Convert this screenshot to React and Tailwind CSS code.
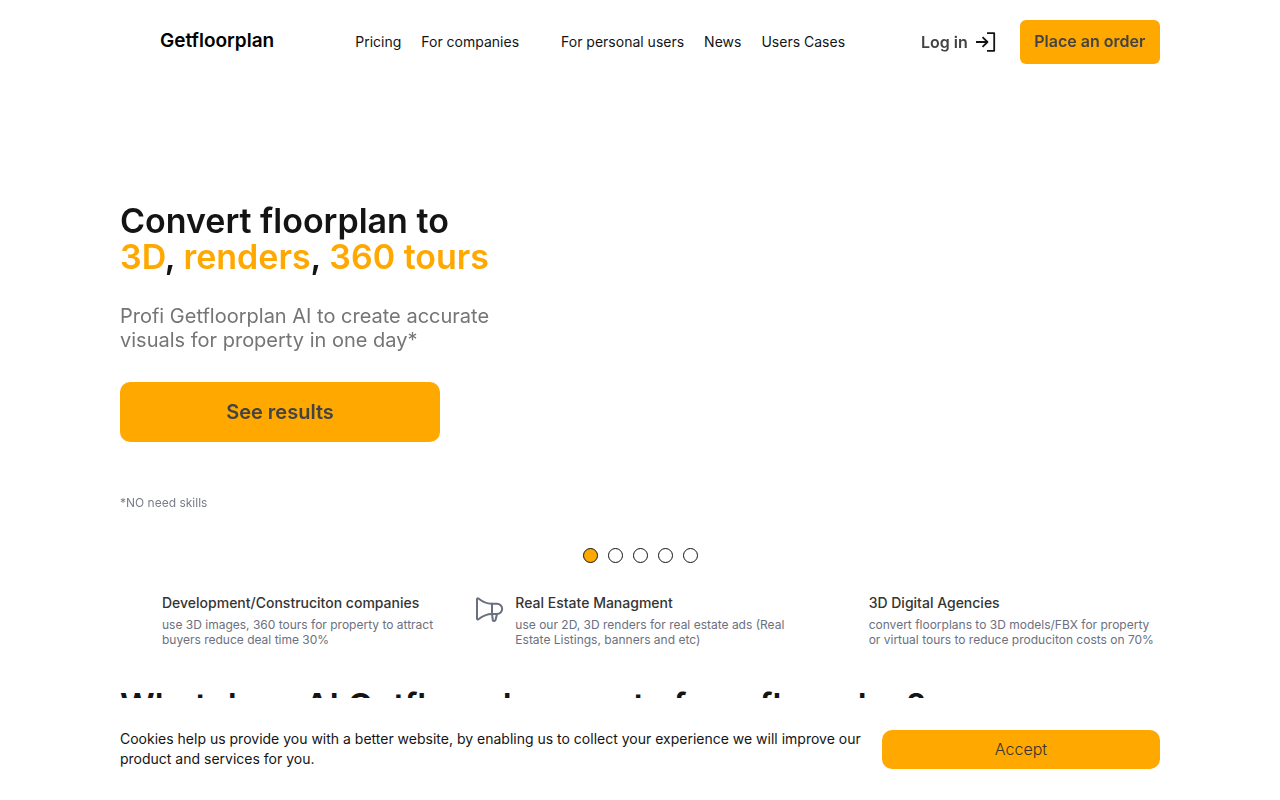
import { useState } from 'react';

const companyLinks = ['Pricing', 'For companies'];
const userLinks = ['For personal users', 'News', 'Users Cases'];

const features = [
  {
    title: 'Development/Construciton companies',
    text: 'use 3D images, 360 tours for property to attract buyers reduce deal time 30%',
  },
  {
    title: 'Real Estate Managment',
    text: 'use our 2D, 3D renders for real estate ads (Real Estate Listings, banners and etc)',
    icon: true,
  },
  {
    title: '3D Digital Agencies',
    text: 'convert floorplans to 3D models/FBX for property or virtual tours to reduce produciton costs on 70%',
  },
];

const LoginIcon = () => (
  <svg className="w-6 h-6" viewBox="0 0 24 24" fill="none" stroke="#141414" strokeWidth="1.8" strokeLinejoin="round" aria-hidden="true">
    <path d="M13 3.2h7.200v17.600H13" />
    <path d="M2 12h11.500M8.500 7.200l5 4.800-5 4.800" />
  </svg>
);

const MegaphoneIcon = () => (
  <svg className="w-8 h-8" viewBox="0 -1 32 32" fill="none" stroke="#6b7080" strokeWidth="2" strokeLinecap="round" strokeLinejoin="round" aria-hidden="true">
    <path d="M4 5.2c0-.9.8-1.2 1.5-.7C9.5 7.8 13.5 9.7 18.5 9.7H24a5.1 5.1 0 0 1 0 10.3h-5.5c-4.5 0-8.5 1.8-13 5.3-.7.5-1.5.2-1.5-.7z" />
    <path d="M19 9.7V20l.8 6c.2 1.3 2.4 1.3 2.7 0l1.5-6" />
  </svg>
);

const Header = () => (
  <header className="max-w-[1040px] mx-auto py-5 flex items-center">
    <a href="#" className="ml-10 -mt-[2px] text-[19px] leading-6 font-semibold text-black">Getfloorplan</a>
    <nav className="ml-[81px] flex gap-[42px] text-sm text-[#141414]">
      {[companyLinks, userLinks].map((group) => (
        <div key={group[0]} className="flex gap-5">
          {group.map((link) => (
            <a key={link} href="#">{link}</a>
          ))}
        </div>
      ))}
    </nav>
    <div className="ml-auto flex items-center gap-[22px] will-change-transform">
      <a href="#" className="flex items-center gap-[6px] font-semibold text-[#434343]">
        Log in
        <LoginIcon />
      </a>
      <button className="w-[140px] h-11 pb-[2px] rounded-md bg-[#ffa800] font-semibold text-[#434343]">Place an order</button>
    </div>
  </header>
);

const Hero = () => (
  <section className="pt-[119px] will-change-transform">
    <h1 className="text-[34px] leading-9 font-semibold text-[#141414]">
      Convert floorplan to
      <br />
      <span className="text-[#ffa800]">3D</span>, <span className="text-[#ffa800]">renders</span>, <span className="text-[#ffa800]">360 tours</span>
    </h1>
    <p className="mt-[29px] max-w-[400px] text-xl leading-6 text-[#757575]">
      Profi Getfloorplan AI to create accurate visuals for property in one day*
    </p>
    <button className="mt-[30px] w-80 h-[60px] rounded-[10px] bg-[#ffa800] text-xl font-semibold text-[#434343]">See results</button>
    <p className="mt-[53px] text-xs text-[#7a7d8a]">*NO need skills</p>
  </section>
);

const App = () => {
  const [slide, setSlide] = useState(0);
  const [cookies, setCookies] = useState(true);

  return (
    <div className="min-h-screen overflow-hidden bg-white font-['Inter',sans-serif]">
      <Header />

      <main className="max-w-[1040px] mx-auto">
        <Hero />

        <div className="mt-[37px] flex justify-center gap-[10px]">
          {[0, 1, 2, 3, 4].map((i) => (
            <button
              key={i}
              aria-label={`Slide ${i + 1}`}
              onClick={() => setSlide(i)}
              className={`w-[15px] h-[15px] rounded-full border border-[#141414] ${i === slide ? 'bg-[#ffa800]' : 'bg-white'}`}
            />
          ))}
        </div>

        <div className="mt-[30px] grid grid-cols-3 gap-5">
          {features.map((item) => (
            <div key={item.title} className="flex gap-[10px]">
              <div className="w-8 shrink-0">{item.icon && <MegaphoneIcon />}</div>
              <div>
                <h3 className="text-sm font-medium text-[#343434]">{item.title}</h3>
                <p className="mt-1 text-xs leading-[15px] text-[#6b7080]">{item.text}</p>
              </div>
            </div>
          ))}
        </div>

        <h2 className="mt-[41px] mb-16 text-[34px] leading-9 font-semibold text-[#141414]">
          What does AI Getfloorplan create from floorplan?
        </h2>
      </main>

      {cookies && (
        <div className="fixed bottom-0 inset-x-0 bg-white py-[31px]">
          <div className="max-w-[1040px] mx-auto flex items-end justify-between gap-4">
            <p className="text-sm text-[#141414]">
              Cookies help us provide you with a better website, by enabling us to collect your experience we will improve our product and services for you.
            </p>
            <button onClick={() => setCookies(false)} className="w-[278px] h-[39px] shrink-0 pb-[2px] rounded-[10px] bg-[#ffa800] font-light text-[#343434]">
              Accept
            </button>
          </div>
        </div>
      )}
    </div>
  );
};

export default App;
